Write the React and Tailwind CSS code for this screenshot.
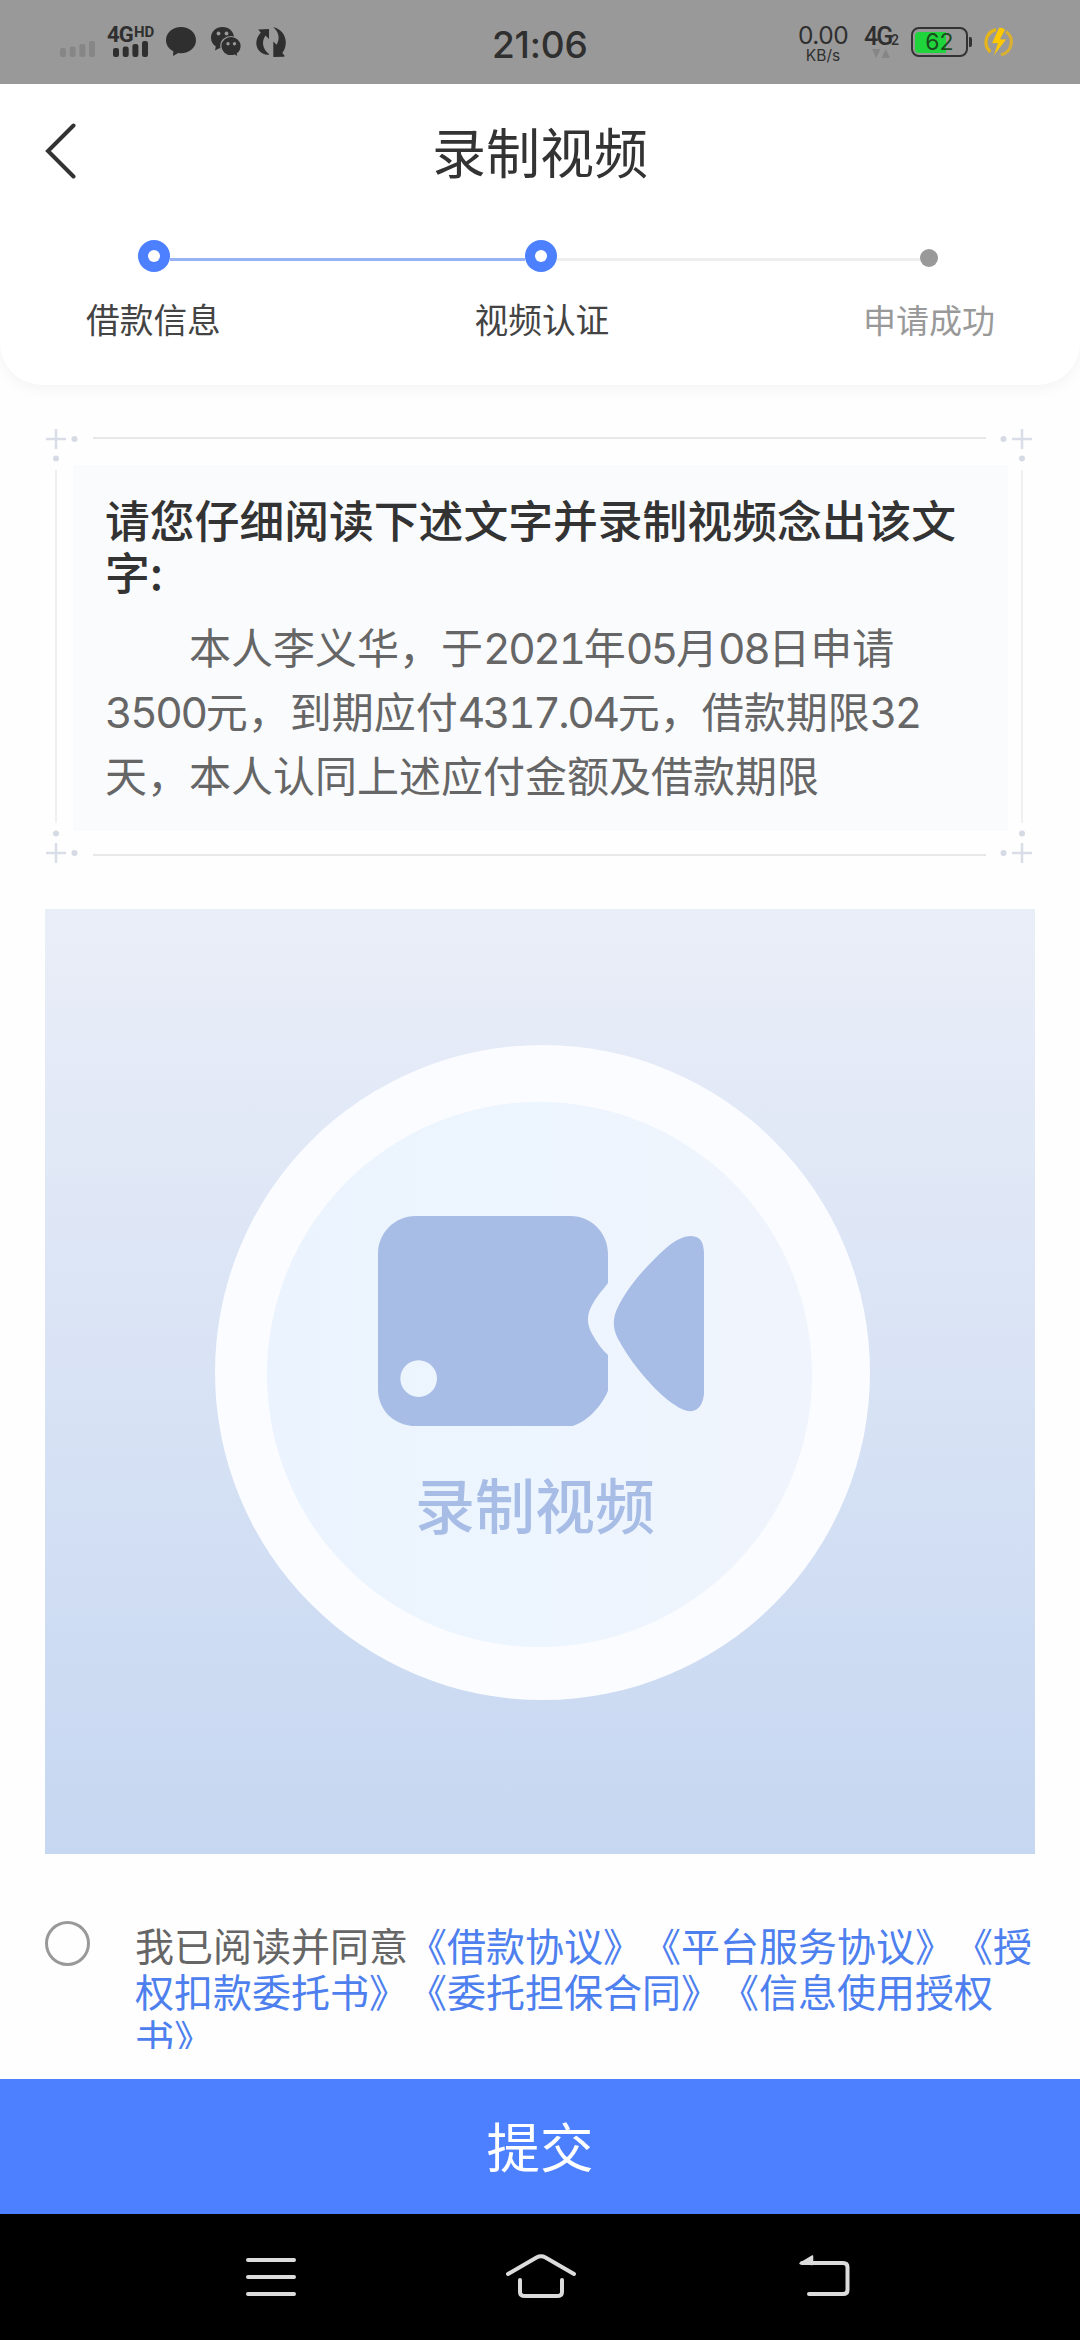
const CJK = "font-['Noto_Sans_CJK_SC',sans-serif]";

function SignalBars({ className }) {
  return (
    <svg className={className} viewBox="0 0 36 16" fill="currentColor">
      <rect x="0" y="7" width="6" height="9" rx="2.2" />
      <rect x="9.7" y="5.5" width="6" height="10.5" rx="2.2" />
      <rect x="19.4" y="3" width="6" height="13" rx="2.2" />
      <rect x="29" y="0" width="6" height="16" rx="2.2" />
    </svg>
  );
}

function StatusBar() {
  return (
    <div className="relative flex h-[84px] shrink-0 items-start bg-[#999999] font-['Inter',sans-serif] text-[#2f2f2f]">
      <SignalBars className="ml-[60px] mt-[41px] h-4 w-9 text-[#868686]" />
      <div className="ml-[11px] mt-[26px] w-[50px]">
        <div className="flex h-[15px] items-start font-bold whitespace-nowrap font-['Roboto',sans-serif]">
          <span className="w-[27px] text-[22px] leading-[17px] tracking-[-0.8px]">4G</span>
          <span className="text-[15px] leading-[12px]">HD</span>
        </div>
        <SignalBars className="ml-[6px] h-4 w-9" />
      </div>
      <svg className="ml-[9px] mt-[27px] h-[30px] w-[30px]" viewBox="0 0 30 30" fill="currentColor">
        <path d="M15 0C6.6 0 0 5.6 0 13.2c0 4.6 2.8 8.8 7.3 11l-.3 4.7 5.2-2.9c.9.2 1.8.2 2.8.2 8.4 0 15-5.6 15-13S23.4 0 15 0Z" />
      </svg>
      <svg className="ml-[15px] mt-[27px] h-[30px] w-[30px]" viewBox="0 0 30 30">
        <path d="M11.5 0C5 0 0 4.6 0 10.8c0 3.7 1.8 6.7 4.8 8.7L4 23.5l4.2-2.2c5 .8 14.8-1.5 14.8-10.5C23 4.6 18 0 11.5 0Z" fill="#2f2f2f" />
        <path d="M20 9.5c-5.7 0-10.2 4.2-10.2 9.5s4.5 9.7 10.2 9.7c1.300 0 2.500-.2 3.600-.6l3.500 1.900-.7-3.400c2.400-1.800 3.800-4.500 3.800-7.600 0-5.300-4.500-9.500-10.200-9.500Z" fill="#2f2f2f" stroke="#999" strokeWidth="1.2" />
        <g fill="#999">
          <circle cx="7.500" cy="6.500" r="1.900" />
          <circle cx="15.500" cy="6.500" r="1.900" />
          <circle cx="17" cy="16.800" r="1.700" />
          <circle cx="23.500" cy="16.800" r="1.700" />
        </g>
      </svg>
      <svg className="ml-[15px] mt-[27px] h-[30px] w-[30px]" viewBox="0 0 30 30" fill="currentColor">
        <path d="M2.200 2.500 13 2.100v10L9.500 8.600C5.500 14 6 22 13.500 27.500 7 28.800.3 23.500.3 16c0-4 1.700-7.400 4.500-10.300Z" />
        <path d="M17 .3c7.300 1 12.800 7.500 12.800 15.200 0 4-1.300 7.500-3.500 10.500l2.300 2.800-.4 1L17.300 30V14.500l3.300 3.300C24.500 11.500 22.500 4 17 .3Z" />
      </svg>

      <div className="ml-[206px] mt-[26px] w-[97px] text-[37px] font-medium leading-[37px] tracking-[-0.200px] whitespace-nowrap">21:06</div>

      <div className="ml-[206px] mt-[23px] flex w-[56px] flex-col items-center">
        <span className="text-[24.500px] leading-[24px] tracking-[-0.500px]">0.00</span>
        <span className="text-[15.500px] leading-[17px]">KB/s</span>
      </div>
      <div className="ml-[13px] mt-[24px] w-[38px]">
        <div className="flex h-[24px] items-end font-medium whitespace-nowrap font-['Roboto',sans-serif]">
          <span className="w-[26px] text-[25px] leading-[23px] tracking-[-1.900px]">4G</span>
          <span className="ml-[1px] text-[14px] leading-[16px]">2</span>
        </div>
        <svg className="ml-[8px] mt-[1px] h-[9px] w-[18px] text-[#868686]" viewBox="0 0 18 9" fill="currentColor">
          <path d="M0 0h8.500L4.200 9ZM9.500 9H18L13.800 0Z" />
        </svg>
      </div>
      <div className="ml-[9px] mt-[27px] flex items-center">
        <div className="relative flex h-[30px] w-[57px] items-center rounded-[8px] border-[2.500px] border-[#333] px-[2px]">
          <div className="h-[21px] w-[31px] rounded-l-[4px] bg-[#20d43c]" />
          <span className="absolute inset-0 flex items-center justify-center pt-[1px] text-[23px] leading-none text-[#1d4a1f]">
            62
          </span>
        </div>
        <div className="ml-[1px] h-[10px] w-[2.500px] rounded-r-[2px] bg-[#333]" />
      </div>
      <svg className="ml-[11px] mt-[26px] h-8 w-8" viewBox="0 0 32 32">
        <path d="M13 3.600A13 13 0 0 0 7.500 26" fill="none" stroke="#e6b519" strokeWidth="3.200" />
        <path d="M23 5.500A13 13 0 0 1 18 28.700" fill="none" stroke="#d9b032" strokeWidth="3.200" />
        <path d="M16 1.200 8.500 17.500h6L10 31 23.800 13h-6.300L22.500 3.500Q19.500 1.200 16 1.200Z" fill="#ffc800" stroke="#999" strokeWidth="0.800" />
      </svg>
    </div>
  );
}

function StepDot({ active }) {
  return active ? (
    <div className="flex h-8 w-8 shrink-0 items-center justify-center rounded-full bg-[#4c80ff]">
      <div className="h-3 w-3 rounded-full bg-white" />
    </div>
  ) : (
    <div className="mt-[3px] h-[18px] w-[18px] shrink-0 rounded-full bg-[#999]" />
  );
}

function Header() {
  return (
    <header className="h-[301px] shrink-0 rounded-b-[42px] bg-white shadow-[0_4px_14px_rgba(0,0,0,0.045)]">
      <div className="grid h-[138px] grid-cols-[200px_1fr_200px] items-center">
        <svg className="mb-[4px] ml-[44px] h-[56px] w-[34px]" viewBox="0 0 34 56" fill="none" stroke="#333" strokeWidth="4" strokeLinecap="round">
          <path d="M29.500 2.500 4 28l25.500 25.500" />
        </svg>
        <h1 className="mb-[4px] text-center text-[54px] leading-[60px] text-[#333]">录制视频</h1>
      </div>
      <div className="ml-[137.500px] flex h-[68px] w-[801px] items-center">
        <StepDot active />
        <div className="mt-[6px] h-[3px] w-[355px] bg-[#97b3f5]" />
        <StepDot active />
        <div className="mt-[6px] h-[3px] w-[363px] bg-[#eeeeef]" />
        <StepDot />
      </div>
      <div className="flex items-center justify-between pl-[86px] pr-[85px] pt-[9px] text-[33.700px] leading-[40px] text-[#444]">
        <span>借款信息</span>
        <span>视频认证</span>
        <span className="text-[33px] text-[#999]">申请成功</span>
      </div>
    </header>
  );
}

function Corner({ className }) {
  return (
    <svg className={className} viewBox="0 0 34 34" fill="none">
      <path d="M11 1v20M1 11h20" stroke="#d9dde8" strokeWidth="2.500" />
      <circle cx="29.500" cy="11" r="3" fill="#d6dae4" />
      <circle cx="11" cy="30.500" r="3" fill="#d6dae4" />
    </svg>
  );
}

function Frame({ children }) {
  return (
    <div className="relative mx-[45px] mt-[43px] h-[436px] shrink-0">
      <Corner className="absolute left-0 top-0 h-[34px] w-[34px]" />
      <Corner className="absolute right-[2px] top-0 h-[34px] w-[34px] -scale-x-100" />
      <Corner className="absolute bottom-0 left-0 h-[34px] w-[34px] -scale-y-100" />
      <Corner className="absolute bottom-0 right-[2px] h-[34px] w-[34px] -scale-100" />
      <div className="absolute left-[48px] right-[49px] top-[9px] h-[2px] bg-[#e8e8e9]" />
      <div className="absolute bottom-[8px] left-[48px] right-[49px] h-[2px] bg-[#e8e8e9]" />
      <div className="absolute bottom-[41px] left-[10px] top-[42px] w-[2px] bg-[#f0f0f2]" />
      <div className="absolute bottom-[41px] right-[12px] top-[42px] w-[2px] bg-[#f0f0f2]" />
      <div className="h-full pb-[33px] pl-[28px] pr-[27px] pt-[37px]">{children}</div>
    </div>
  );
}

function Num({ children }) {
  return <span className="font-['Inter',sans-serif] text-[42.500px] tracking-[-2.400px] tabular-nums">{children}</span>;
}

function Statement() {
  return (
    <Frame>
      <div className="h-full whitespace-nowrap bg-[#fafbfd] pl-[32px] pt-[28px]">
        <h2 className="text-[44.800px] font-medium leading-[52px] text-[#333]">
          请您仔细阅读下述文字并录制视频念出该文
          <br />
          字:
        </h2>
        <div className="mt-[17px] text-[42px] text-[#666]">
          <p className="h-[64px] indent-[84px] leading-[64px]">
            本人李义华，于<Num>2021</Num>年<Num>05</Num>月<Num>08</Num>日申请
          </p>
          <p className="h-[64px] leading-[64px]">
            <Num>3500</Num>元，到期应付<Num>4317.04</Num>元，借款期限<Num>32</Num>
          </p>
          <p className="h-[64px] leading-[64px]">天，本人认同上述应付金额及借款期限</p>
        </div>
      </div>
    </Frame>
  );
}

function Recorder() {
  return (
    <div className="mx-[45px] mt-[45px] h-[945px] shrink-0 bg-linear-to-b from-[#eaeef8] to-[#c6d7f1] pt-[136px]">
      <div className="ml-[170px] h-[655px] w-[655px] rounded-full bg-[#fafcff] pl-[52px] pt-[56.500px]">
        <div className="flex h-[545px] w-[545px] flex-col rounded-full bg-linear-to-r from-[#ebf3fe] via-[#edf5fe] to-[#f0f4fc] pt-[114px]">
          <svg className="ml-[111px] h-[210px] w-[326px] shrink-0" viewBox="399 438 730 470" fill="#a8bde6">
            <path
              fillRule="evenodd"
              d="M483 438H830C878 438 914 477 914 522V588C903 603 889 617 879 636C866 658 866 680 878 701C889 722 901 737 914 749V829C898 867 866 899 834 908H483C437 908 399 874 399 825V522C399 476 437 438 483 438ZM490 761a41 41 0 1 0 .1 0Z"
            />
            <path d="M1129 520V836C1127 858 1118 874 1099 875C1080 876 1050 852 1034 838C1000 806 962 761 936 712C924 690 924 666 936 642C960 594 1002 546 1048 506C1066 492 1084 482 1103 483C1124 484 1128 501 1129 520Z" />
          </svg>
          <span className="ml-[148px] mt-[42px] text-[60px] font-medium leading-[70px] text-[#a8bde6]">录制视频</span>
        </div>
      </div>
    </div>
  );
}

function Agreement() {
  return (
    <div className="mx-[45px] flex h-[225px] shrink-0 pt-[67px]">
      <div className="h-[45px] w-[45px] shrink-0 rounded-full border-[3px] border-[#999]" />
      <p className="ml-[45px] h-[128px] w-[900px] overflow-hidden whitespace-nowrap text-[39px] leading-[46px] text-[#4d80ee] [text-spacing-trim:space-all]">
        <span className="text-[#666]">我已阅读并同意</span>《借款协议》《平台服务协议》《授
        <br />
        权扣款委托书》《委托担保合同》《信息使用授权
        <br />
        书》
      </p>
    </div>
  );
}

function NavBar() {
  return (
    <nav className="flex h-[126px] shrink-0 items-start bg-black pt-[39px]">
      <svg className="ml-[245px] h-[48px] w-[52px]" viewBox="0 0 52 48" stroke="#dcdcdc" strokeWidth="4" strokeLinecap="round">
        <path d="M3 7h46M3 24h46M3 41h46" />
      </svg>
      <svg className="ml-[208px] h-[48px] w-[72px]" viewBox="0 0 72 48" fill="none" stroke="#dcdcdc" strokeWidth="4" strokeLinecap="round">
        <path d="M3 21 31.500 4.500Q36 2.200 40.500 4.500L69 21" />
        <path d="M15 27v12q0 4 5 4h32q5 0 5-4V27" />
      </svg>
      <svg className="ml-[220px] h-[48px] w-[54px]" viewBox="0 0 54 48" fill="none" stroke="#dcdcdc" strokeWidth="4" strokeLinecap="round">
        <path d="M5 10h41q4.500 0 4.500 4v23q0 4-4.500 4H12" />
        <path d="M3 10.500 15.500 3v8.500Z" fill="#dcdcdc" strokeWidth="1.500" strokeLinejoin="round" />
      </svg>
    </nav>
  );
}

export default function App() {
  return (
    <div className={`${CJK} flex h-[2340px] w-[1080px] flex-col overflow-hidden bg-[#fefefe]`}>
      <StatusBar />
      <Header />
      <Statement />
      <Recorder />
      <Agreement />
      <button className="flex h-[135px] shrink-0 items-center justify-center bg-[#4c80ff] text-[53.500px] leading-[60px] text-white">
        <span className="-mt-[3px]">提交</span>
      </button>
      <NavBar />
    </div>
  );
}
